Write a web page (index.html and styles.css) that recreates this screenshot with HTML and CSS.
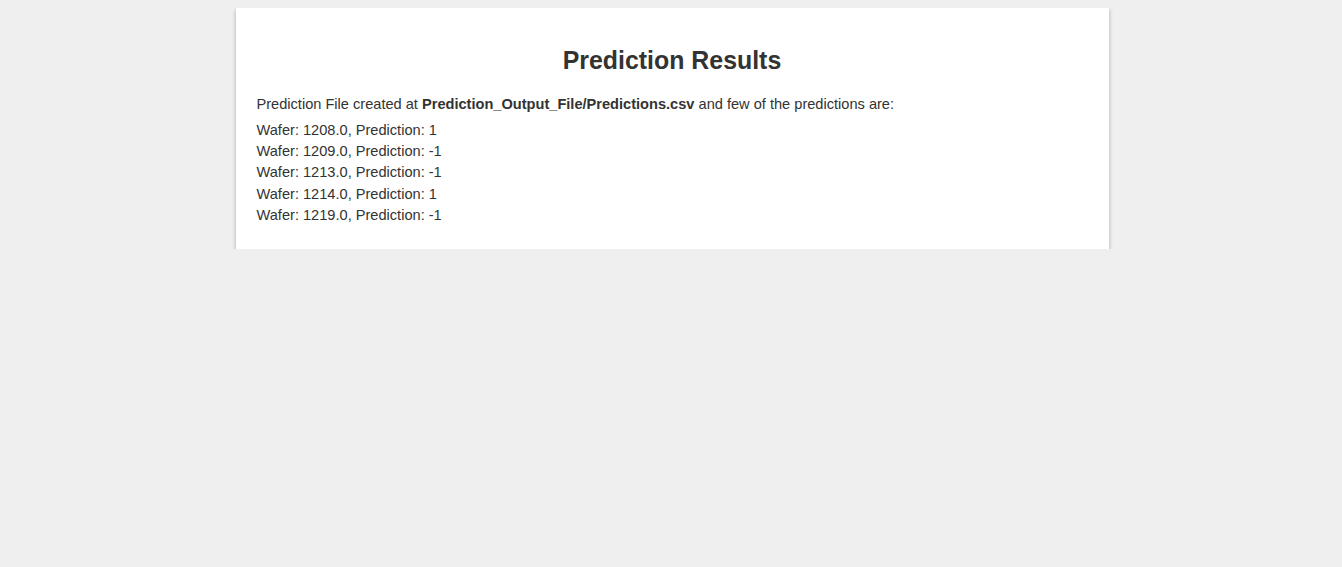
FILE: index.html
```html
<!DOCTYPE html>
<html>
<head>
<meta charset="utf-8">
<link rel="stylesheet" href="styles.css">
</head>
<body>
<div class="card">
  <h2 class="title">Prediction Results</h2>
  <p class="intro">Prediction File created at <strong>Prediction_Output_File/Predictions.csv</strong> and few of the predictions are:</p>
  <div class="rows">
    <div>Wafer: 1208.0, Prediction: 1</div>
    <div>Wafer: 1209.0, Prediction: -1</div>
    <div>Wafer: 1213.0, Prediction: -1</div>
    <div>Wafer: 1214.0, Prediction: 1</div>
    <div>Wafer: 1219.0, Prediction: -1</div>
  </div>
</div>
</body>
</html>
```
FILE: styles.css
```css
html, body { background: #efefef; }
body {
  margin: 8px 0 0 2px;
  font-family: "Liberation Sans", Arial, sans-serif;
  color: #333;
  font-size: 14.6px;
}
.card {
  width: 873px;
  margin: 0 auto;
  box-sizing: border-box;
  background: #fff;
  box-shadow: 0 2px 4px rgba(0,0,0,0.3);
  padding: 28px 21px 23px;
}
.title {
  margin: 10px 0 18px;
  text-align: center;
  font-size: 24.9px;
  font-weight: bold;
  line-height: 1.2;
}
.intro {
  margin: 0 0 5px;
  line-height: 21px;
}
.rows div { line-height: 21.25px; }
```
